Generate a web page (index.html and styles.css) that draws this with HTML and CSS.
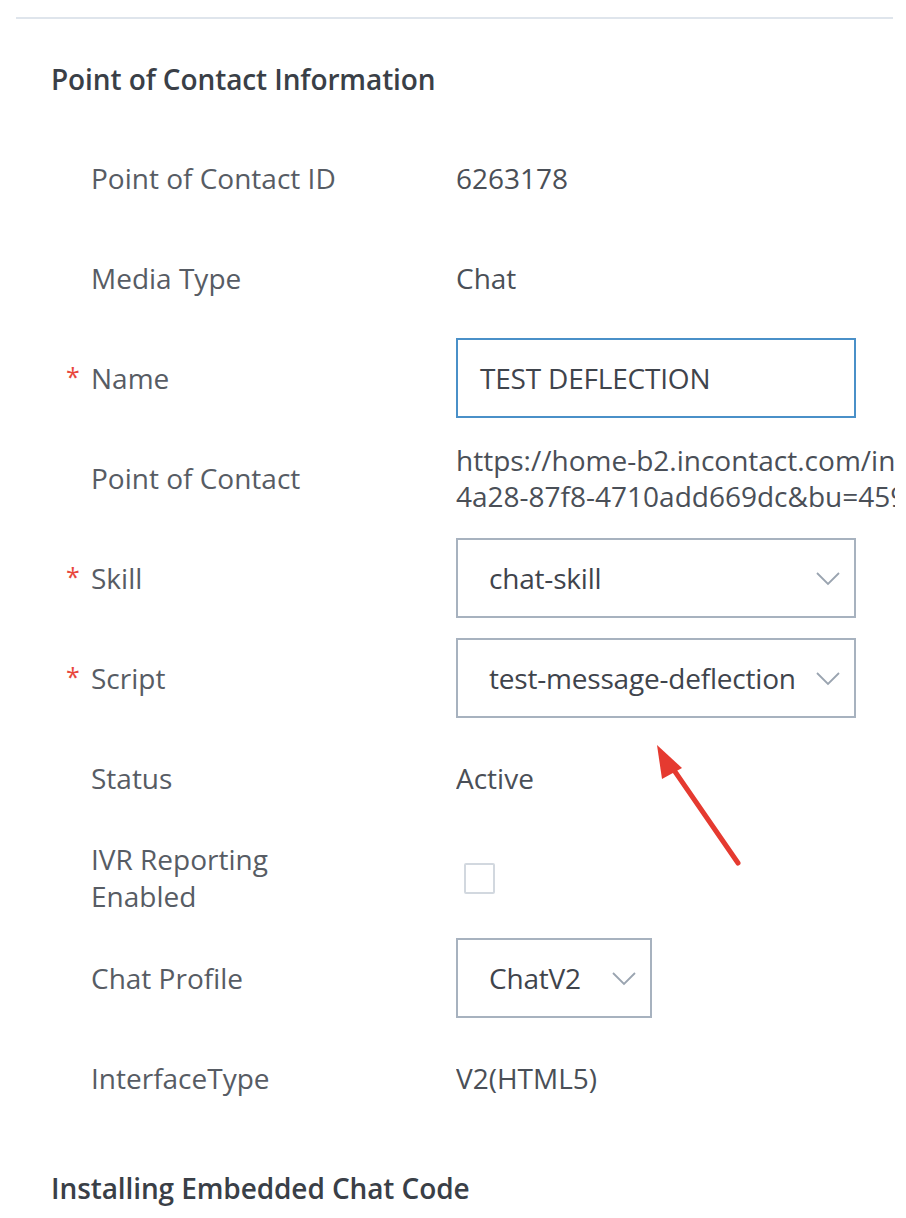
FILE: index.html
```html
<!DOCTYPE html>
<html>
<head>
<meta charset="utf-8">
<link rel="stylesheet" href="styles.css">
</head>
<body>
<div class="page">
  <hr class="rule">
  <h2 class="section-title">Point of Contact Information</h2>
  <div class="form">
    <div class="row">
      <div class="label">Point of Contact ID</div>
      <div class="value">6263178</div>
    </div>
    <div class="row">
      <div class="label">Media Type</div>
      <div class="value">Chat</div>
    </div>
    <div class="row">
      <div class="label"><span class="req">*</span>Name</div>
      <div class="value"><div class="input focused">TEST DEFLECTION</div></div>
    </div>
    <div class="row">
      <div class="label">Point of Contact</div>
      <div class="value url">https://home-b2.incontact.com/inContact/ChatClient/ChatClient.aspx?poc=6a1e2c1f-<br>4a28-87f8-4710add669dc&amp;bu=4597183</div>
    </div>
    <div class="row">
      <div class="label"><span class="req">*</span>Skill</div>
      <div class="value"><div class="input select">chat-skill<svg class="chev" viewBox="0 0 24 14"><path d="M1 1 L12 12 L23 1" /></svg></div></div>
    </div>
    <div class="row">
      <div class="label"><span class="req">*</span>Script</div>
      <div class="value"><div class="input select">test-message-deflection<svg class="chev" viewBox="0 0 24 14"><path d="M1 1 L12 12 L23 1" /></svg></div></div>
    </div>
    <div class="row">
      <div class="label">Status</div>
      <div class="value">Active</div>
    </div>
    <div class="row">
      <div class="label">IVR Reporting<br>Enabled</div>
      <div class="value"><span class="checkbox"></span></div>
    </div>
    <div class="row">
      <div class="label">Chat Profile</div>
      <div class="value"><div class="input select small">ChatV2<svg class="chev" viewBox="0 0 24 14"><path d="M1 1 L12 12 L23 1" /></svg></div></div>
    </div>
    <div class="row">
      <div class="label">InterfaceType</div>
      <div class="value">V2(HTML5)</div>
    </div>
  </div>
  <h2 class="section-title second">Installing Embedded Chat Code</h2>
  <svg class="arrow" viewBox="0 0 906 1218" width="906" height="1218">
    <line x1="738" y1="863" x2="667" y2="760" stroke="#e53a30" stroke-width="5" stroke-linecap="round"/>
    <polygon points="657,745 682,768 662,779" fill="#e53a30"/>
  </svg>
</div>
</body>
</html>
```
FILE: styles.css
```css
html, body {
  margin: 0;
  padding: 0;
  background: #ffffff;
}
body {
  font-family: "Open Sans", "Noto Sans", sans-serif;
  color: #4a4f57;
  width: 906px;
  height: 1218px;
  overflow: hidden;
}
.page {
  position: relative;
  padding-top: 17px;
}
.rule {
  margin: 0 13px 0 16px;
  border: 0;
  height: 2px;
  background: #dfe5ec;
}
.section-title {
  margin: 0;
  padding-left: 51px;
  font-size: 28px;
  font-weight: 600;
  color: #3a3f47;
  line-height: 36px;
  letter-spacing: -0.1px;
  padding-top: 42px;
  padding-bottom: 31px;
}
.section-title.second {
  padding-top: 42px;
  padding-bottom: 0;
}
.form {
  display: flex;
  flex-direction: column;
}
.row {
  display: grid;
  grid-template-columns: 395px 1fr;
  height: 100px;
  align-items: center;
  padding-left: 61px;
  padding-right: 11px;
  white-space: nowrap;
}
.label {
  font-size: 28px;
  line-height: 37px;
  color: #575c64;
  padding-left: 30px;
  position: relative;
}
.req {
  position: absolute;
  left: 5px;
  top: -2px;
  color: #e8473c;
  font-size: 25px;
}
.value {
  font-size: 28px;
  line-height: 36px;
  color: #4a4f57;
  overflow: hidden;
}
.input {
  box-sizing: border-box;
  width: 400px;
  height: 80px;
  border: 2px solid #a7b2bf;
  display: flex;
  align-items: center;
  padding-left: 22px;
  color: #3f444c;
  position: relative;
  letter-spacing: -0.2px;
}
.input.focused {
  border-color: #4a90c8;
}
.input.select {
  padding-left: 31px;
}
.input.small {
  width: 196px;
}
.chev {
  position: absolute;
  right: 14px;
  top: 32px;
  width: 24px;
  height: 14px;
  fill: none;
  stroke: #9aa4b0;
  stroke-width: 1.8;
}
.checkbox {
  display: block;
  margin-left: 8px;
  width: 31px;
  height: 31px;
  box-sizing: border-box;
  border: 2px solid #d2d8df;
  border-radius: 2px;
}
.arrow {
  position: absolute;
  left: 0;
  top: 0;
  pointer-events: none;
}
```
